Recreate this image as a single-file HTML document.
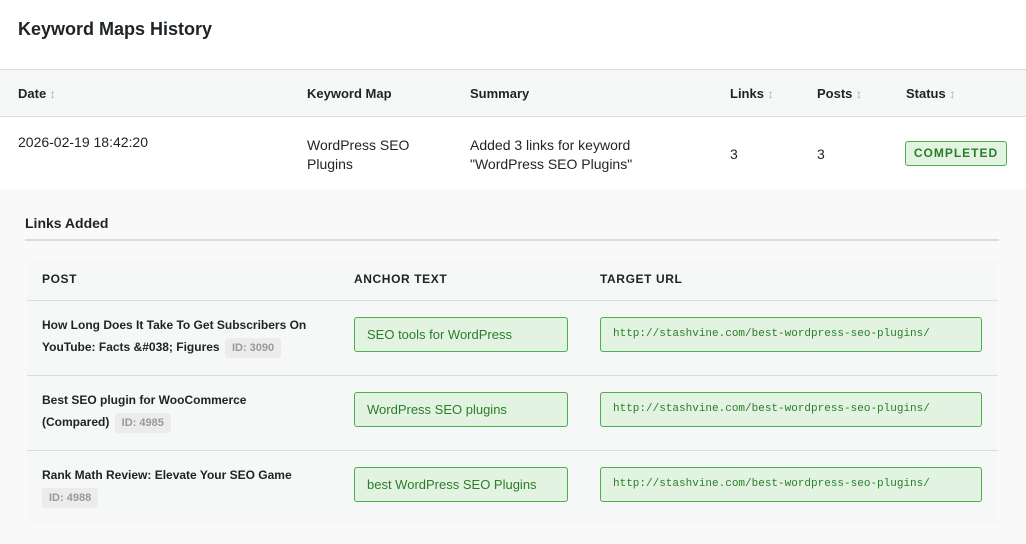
<!DOCTYPE html>
<html><head><meta charset="utf-8"><style>
*{margin:0;padding:0;box-sizing:border-box}
body{width:1026px;height:544px;overflow:hidden;background:#fff;font-family:"Liberation Sans",Arial,sans-serif;color:#1d2327;position:relative}
.a{position:absolute;white-space:nowrap}
.h{font-size:13px;font-weight:bold}
.s{color:#aaa;font-size:12px;font-weight:normal}
.t{font-size:14px}
.th{font-size:12px;font-weight:bold;letter-spacing:.6px}
.p{font-size:12px;font-weight:bold;line-height:22px;white-space:normal;width:268px}
.id{display:inline-block;line-height:16px;background:#ececec;color:#999;font-size:11px;padding:2px 7px;border-radius:3px;margin-left:2px;white-space:nowrap}
.box{position:absolute;background:#e3f3e1;border:1px solid #4cae4c;border-radius:3px;color:#2a7d2a;font-size:13px;padding-left:12px;line-height:33px;height:35px}
.mono{font-family:"Liberation Mono",monospace;font-size:11px}
</style></head><body>
<div class="a" style="left:18px;top:19px;font-size:18px;font-weight:bold">Keyword Maps History</div>
<div class="a" style="left:0;top:69px;width:1026px;height:48px;background:#f6f7f7;border-top:1px solid #dcdcde;border-bottom:1px solid #dcdcde"></div>
<div class="a h" style="left:18px;top:86px">Date <span class="s">↕</span></div>
<div class="a h" style="left:307px;top:86px">Keyword Map</div>
<div class="a h" style="left:470px;top:86px">Summary</div>
<div class="a h" style="left:730px;top:86px">Links <span class="s">↕</span></div>
<div class="a h" style="left:817px;top:86px">Posts <span class="s">↕</span></div>
<div class="a h" style="left:906px;top:86px">Status <span class="s">↕</span></div>
<div class="a t" style="left:18px;top:134px">2026-02-19 18:42:20</div>
<div class="a t" style="left:307px;top:136px;line-height:19px">WordPress SEO<br>Plugins</div>
<div class="a t" style="left:470px;top:136px;line-height:19px">Added 3 links for keyword<br>"WordPress SEO Plugins"</div>
<div class="a t" style="left:730px;top:146px">3</div>
<div class="a t" style="left:817px;top:146px">3</div>
<div class="a" style="left:905px;top:141px;width:102px;height:25px;border:1px solid #4cae4c;border-radius:3px;background:#e3f3e1;color:#2a7d2a;font-size:12px;font-weight:bold;letter-spacing:1px;text-align:center;line-height:23px">COMPLETED</div>
<div class="a" style="left:0;top:189px;width:1026px;height:355px;background:#f9f9f9"></div>
<div class="a h" style="left:25px;top:215px;font-size:14px">Links Added</div>
<div class="a" style="left:25px;top:239px;width:974px;height:2px;background:#dcdcde"></div>
<div class="a" style="left:27px;top:259px;width:971px;height:265px;background:#f6f7f7;border-radius:3px"></div>
<div class="a th" style="left:42px;top:272px">POST</div>
<div class="a th" style="left:354px;top:272px">ANCHOR TEXT</div>
<div class="a th" style="left:600px;top:272px">TARGET URL</div>
<div class="a" style="left:27px;top:300px;width:971px;height:1px;background:#dcdcde"></div>
<div class="a" style="left:27px;top:375px;width:971px;height:1px;background:#dcdcde"></div>
<div class="a" style="left:27px;top:450px;width:971px;height:1px;background:#dcdcde"></div>
<div class="a p" style="left:42px;top:314px">How Long Does It Take To Get Subscribers On YouTube: Facts &amp;#038; Figures <span class="id">ID: 3090</span></div>
<div class="a p" style="left:42px;top:389px">Best SEO plugin for WooCommerce (Compared) <span class="id">ID: 4985</span></div>
<div class="a p" style="left:42px;top:464px">Rank Math Review: Elevate Your SEO Game <span class="id" style="margin-left:0">ID: 4988</span></div>
<div class="box" style="left:354px;top:317px;width:214px">SEO tools for WordPress</div>
<div class="box" style="left:354px;top:392px;width:214px">WordPress SEO plugins</div>
<div class="box" style="left:354px;top:467px;width:214px">best WordPress SEO Plugins</div>
<div class="box mono" style="left:600px;top:317px;width:382px">http://stashvine.com/best-wordpress-seo-plugins/</div>
<div class="box mono" style="left:600px;top:392px;width:382px">http://stashvine.com/best-wordpress-seo-plugins/</div>
<div class="box mono" style="left:600px;top:467px;width:382px">http://stashvine.com/best-wordpress-seo-plugins/</div>
</body></html>
